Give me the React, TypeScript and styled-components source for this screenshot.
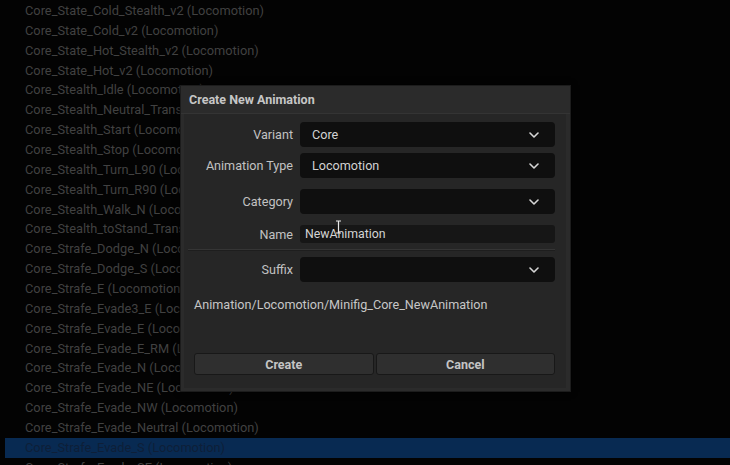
import React from "react";
import styled, { createGlobalStyle } from "styled-components";

const Global = createGlobalStyle`
  html, body { margin: 0; padding: 0; background: #030303; }
  body { width: 730px; height: 465px; overflow: hidden; font-family: Roboto, "Liberation Sans", sans-serif; }
`;

const Page = styled.div`
  position: relative;
  width: 730px;
  height: 465px;
  background: #030303;
  overflow: hidden;
`;

const List = styled.div`
  display: flex;
  flex-direction: column;
  padding-left: 5px;
  padding-top: 1px;
`;

const Row = styled.div<{ $selected?: boolean }>`
  height: 19.86px;
  line-height: 19.86px;
  padding-left: 20px;
  font-size: 12.8px;
  color: ${(p) => (p.$selected ? "#0e1f38" : "#414141")};
  background: ${(p) => (p.$selected ? "#082a52" : "transparent")};
  white-space: nowrap;
`;

const Dialog = styled.div`
  position: absolute;
  left: 180px;
  top: 85px;
  width: 391px;
  height: 307px;
  background: #2b2b2b;
  box-sizing: border-box;
  border: 1px solid #1c1c1c;
  display: flex;
  flex-direction: column;
  box-shadow: 0 0 6px rgba(0, 0, 0, 0.8);
`;

const TitleBar = styled.div`
  height: 28px;
  display: flex;
  align-items: center;
  padding-left: 8px;
  padding-bottom: 1px;
  box-sizing: border-box;
  font-size: 12.5px;
  font-weight: 700;
  color: #c6c6c6;
  border-bottom: 1px solid #343434;
`;

const Body = styled.div`
  flex: 1;
  margin: 0 4px 3px 3px;
  background: #262626;
  display: flex;
  flex-direction: column;
  padding: 8px 11px 13px 0;
  position: relative;
`;

const FieldRow = styled.div<{ $mt: number }>`
  display: grid;
  grid-template-columns: 109px 1fr;
  column-gap: 7px;
  align-items: center;
  margin-top: ${(p) => p.$mt}px;
`;

const Label = styled.div`
  text-align: right;
  font-size: 12.6px;
  color: #c2c2c2;
`;

const Combo = styled.div`
  height: 25px;
  border-radius: 4px;
  background: #0f0f0f;
  display: flex;
  align-items: center;
  justify-content: space-between;
  padding: 0 16px 0 12px;
  font-size: 12.6px;
  color: #d2d2d2;
`;

const TextInput = styled.div`
  position: relative;
  height: 18px;
  border-radius: 3px;
  background: #161616;
  display: flex;
  align-items: center;
  padding-left: 5px;
  font-size: 12.3px;
  color: #d4d4d4;
`;

const Cursor = styled.svg`
  position: absolute;
  left: 35px;
  top: -5px;
`;

const Separator = styled.div`
  margin: 6px 0 0 4px;
  height: 1px;
  background: #353535;
  border-bottom: 1px solid #1e1e1e;
`;

const Path = styled.div`
  margin-top: 15px;
  padding-left: 10px;
  font-size: 12.6px;
  color: #c6c6c6;
`;

const Buttons = styled.div`
  margin-top: auto;
  padding-left: 10px;
  display: grid;
  grid-template-columns: 1fr 1fr;
  column-gap: 2px;
`;

const Button = styled.div`
  height: 22px;
  box-sizing: border-box;
  border: 1px solid #181818;
  border-radius: 3px;
  background: #2f2f2f;
  display: flex;
  align-items: center;
  justify-content: center;
  font-size: 12.5px;
  font-weight: 700;
  color: #c4c4c4;
`;

const Chevron = () => (
  <svg width="10" height="6" viewBox="0 0 10 6">
    <path d="M1 1 L5 5 L9 1" fill="none" stroke="#d6d6d6" strokeWidth="1.6" strokeLinecap="round" strokeLinejoin="round" />
  </svg>
);

const items = [
  "Core_State_Cold_Stealth_v2 (Locomotion)",
  "Core_State_Cold_v2 (Locomotion)",
  "Core_State_Hot_Stealth_v2 (Locomotion)",
  "Core_State_Hot_v2 (Locomotion)",
  "Core_Stealth_Idle (Locomotion)",
  "Core_Stealth_Neutral_Transition (Locomotion)",
  "Core_Stealth_Start (Locomotion)",
  "Core_Stealth_Stop (Locomotion)",
  "Core_Stealth_Turn_L90 (Locomotion)",
  "Core_Stealth_Turn_R90 (Locomotion)",
  "Core_Stealth_Walk_N (Locomotion)",
  "Core_Stealth_toStand_Transition (Locomotion)",
  "Core_Strafe_Dodge_N (Locomotion)",
  "Core_Strafe_Dodge_S (Locomotion)",
  "Core_Strafe_E (Locomotion)",
  "Core_Strafe_Evade3_E (Locomotion)",
  "Core_Strafe_Evade_E (Locomotion)",
  "Core_Strafe_Evade_E_RM (Locomotion)",
  "Core_Strafe_Evade_N (Locomotion)",
  "Core_Strafe_Evade_NE (Locomotion)",
  "Core_Strafe_Evade_NW (Locomotion)",
  "Core_Strafe_Evade_Neutral (Locomotion)",
  "Core_Strafe_Evade_S (Locomotion)",
  "Core_Strafe_Evade_SE (Locomotion)",
];

export default function App() {
  return (
    <Page>
      <Global />
      <List>
        {items.map((t, i) => (
          <Row key={t} $selected={i === 22}>
            {t}
          </Row>
        ))}
      </List>
      <Dialog>
        <TitleBar>Create New Animation</TitleBar>
        <Body>
          <FieldRow $mt={0}>
            <Label>Variant</Label>
            <Combo>
              <span>Core</span>
              <Chevron />
            </Combo>
          </FieldRow>
          <FieldRow $mt={6}>
            <Label>Animation Type</Label>
            <Combo>
              <span>Locomotion</span>
              <Chevron />
            </Combo>
          </FieldRow>
          <FieldRow $mt={11}>
            <Label>Category</Label>
            <Combo>
              <span />
              <Chevron />
            </Combo>
          </FieldRow>
          <FieldRow $mt={11}>
            <Label>Name</Label>
            <TextInput>
              NewAnimation
              <Cursor width="7" height="14" viewBox="0 0 7 14">
                <path d="M1 1 H6 M3.5 1 V13 M1 13 H6" stroke="#e8e8e8" strokeWidth="1.2" fill="none" />
              </Cursor>
            </TextInput>
          </FieldRow>
          <Separator />
          <FieldRow $mt={6}>
            <Label>Suffix</Label>
            <Combo>
              <span />
              <Chevron />
            </Combo>
          </FieldRow>
          <Path>Animation/Locomotion/Minifig_Core_NewAnimation</Path>
          <Buttons>
            <Button>Create</Button>
            <Button>Cancel</Button>
          </Buttons>
        </Body>
      </Dialog>
    </Page>
  );
}
